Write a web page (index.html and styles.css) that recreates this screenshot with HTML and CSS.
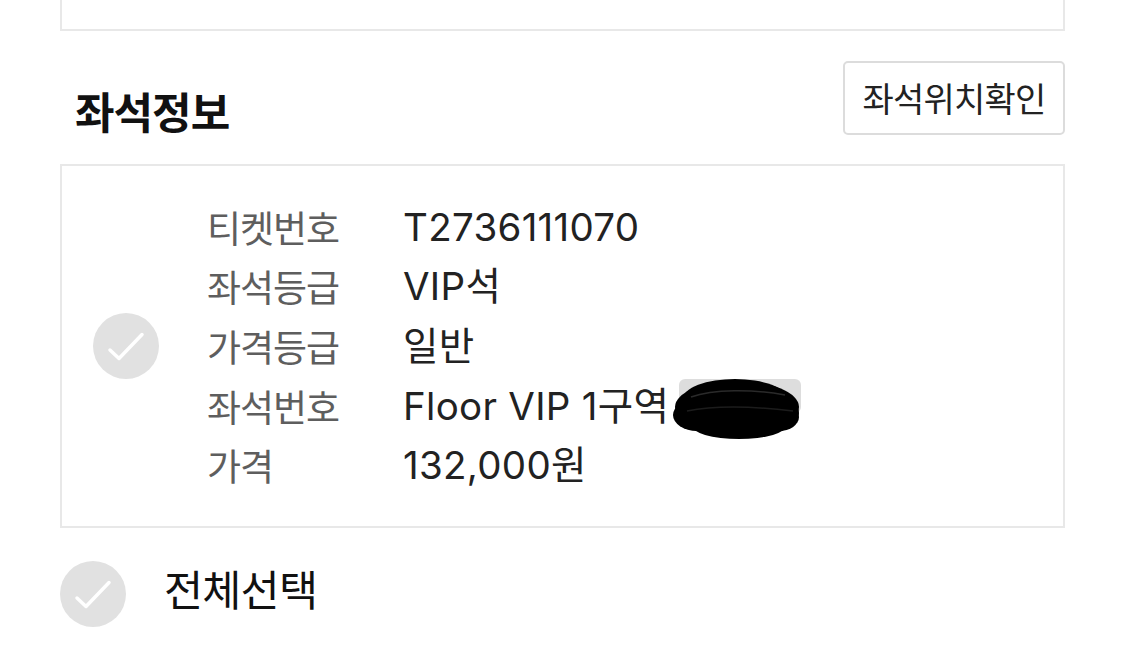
FILE: index.html
```html
<!DOCTYPE html>
<html lang="ko">
<head>
<meta charset="utf-8">
<link rel="stylesheet" href="styles.css">
<title>좌석정보</title>
</head>
<body>
<main class="page">
  <div class="prev-box"></div>

  <div class="section-head">
    <h2 class="section-title">좌석정보</h2>
    <button class="btn-outline" type="button">좌석위치확인</button>
  </div>

  <div class="seat-box">
    <span class="check-circle">
      <svg viewBox="0 0 66 66" width="66" height="66" aria-hidden="true">
        <circle cx="33" cy="33" r="33" fill="#e1e1e1"/>
        <path d="M17 37 L26 45.5 L49 21.5" fill="none" stroke="#fff" stroke-width="3.5" stroke-linecap="round" stroke-linejoin="round"/>
      </svg>
    </span>
    <dl class="info-grid">
      <dt>티켓번호</dt><dd>T2736111070</dd>
      <dt>좌석등급</dt><dd>VIP석</dd>
      <dt>가격등급</dt><dd>일반</dd>
      <dt>좌석번호</dt><dd>Floor VIP 1구역<svg class="redact" viewBox="0 0 136 66" width="136" height="66" aria-hidden="true">
          <rect x="12" y="4" width="122" height="34" rx="6" fill="#cfcfcf" opacity="0.7"/>
          <ellipse cx="70" cy="32" rx="62" ry="26" fill="#000"/>
          <ellipse cx="74" cy="38" rx="58" ry="22" fill="#000"/>
          <ellipse cx="68" cy="24" rx="52" ry="20" fill="#000"/>
          <ellipse cx="72" cy="50" rx="48" ry="14" fill="#000"/>
          <ellipse cx="30" cy="40" rx="24" ry="16" fill="#000"/>
          <ellipse cx="112" cy="42" rx="20" ry="14" fill="#000"/>
          <path d="M24 22 C46 14 86 14 118 20" stroke="#2a2a2a" stroke-width="1.5" fill="none"/>
          <path d="M20 36 C50 30 92 32 126 36" stroke="#1c1c1c" stroke-width="1.5" fill="none"/>
        </svg></dd>
      <dt>가격</dt><dd>132,000원</dd>
    </dl>
  </div>

  <label class="select-all">
    <span class="check-circle">
      <svg viewBox="0 0 66 66" width="66" height="66" aria-hidden="true">
        <circle cx="33" cy="33" r="33" fill="#e1e1e1"/>
        <path d="M17 37 L26 45.5 L49 21.5" fill="none" stroke="#fff" stroke-width="3.5" stroke-linecap="round" stroke-linejoin="round"/>
      </svg>
    </span>
    <span class="select-all-text">전체선택</span>
  </label>
</main>
</body>
</html>
```

FILE: styles.css
```css
* { box-sizing: border-box; }

html, body {
  margin: 0;
  padding: 0;
  background: #fff;
}

body {
  font-family: "Inter", "Noto Sans CJK KR", "Noto Sans", sans-serif;
  color: #222;
  overflow: hidden;
}

.page {
  padding: 0 60px;
}

.prev-box {
  height: 31px;
  border: 2px solid #e8e8e8;
  border-top: none;
}

.section-head {
  height: 133px;
  padding-top: 30px;
  display: flex;
  justify-content: space-between;
  align-items: flex-start;
}

.section-title {
  margin: 0;
  padding: 27px 0 0 15px;
  font-family: "Noto Sans CJK KR", sans-serif;
  font-size: 43px;
  line-height: 44px;
  font-weight: 700;
  color: #111;
  letter-spacing: -1px;
}

.btn-outline {
  width: 222px;
  height: 74px;
  border: 2px solid #dcdcdc;
  border-radius: 5px;
  background: #fff;
  font-family: "Noto Sans CJK KR", sans-serif;
  font-size: 34px;
  letter-spacing: -0.8px;
  color: #222;
  padding: 0 0 2px;
  display: flex;
  align-items: center;
  justify-content: center;
}

.seat-box {
  height: 364px;
  border: 2px solid #e8e8e8;
  padding: 30px 0 30px 31px;
  display: flex;
  align-items: center;
}

.check-circle {
  width: 66px;
  height: 66px;
  flex: none;
  display: block;
}

.check-circle svg { display: block; }

.info-grid {
  margin: 0 0 0 48px;
  display: grid;
  grid-template-columns: 196px auto;
  grid-auto-rows: 59.6px;
  align-items: center;
}

.info-grid dt {
  font-family: "Noto Sans CJK KR", sans-serif;
  font-size: 37px;
  color: #5e5e5e;
  letter-spacing: -1px;
  line-height: 44px;
}

.info-grid dd {
  margin: 0;
  font-size: 38.5px;
  line-height: 44px;
  color: #222;
  white-space: nowrap;
  display: flex;
  align-items: center;
  letter-spacing: 0.3px;
}

.redact {
  display: block;
  margin-left: -2px;
  margin-top: 4px;
}

.select-all {
  margin-top: 33px;
  display: flex;
  align-items: center;
}

.select-all-text {
  margin-left: 38px;
  padding-bottom: 12px;
  font-family: "Noto Sans CJK KR", sans-serif;
  font-size: 42.5px;
  line-height: 44px;
  color: #111;
  letter-spacing: -0.8px;
}
```
